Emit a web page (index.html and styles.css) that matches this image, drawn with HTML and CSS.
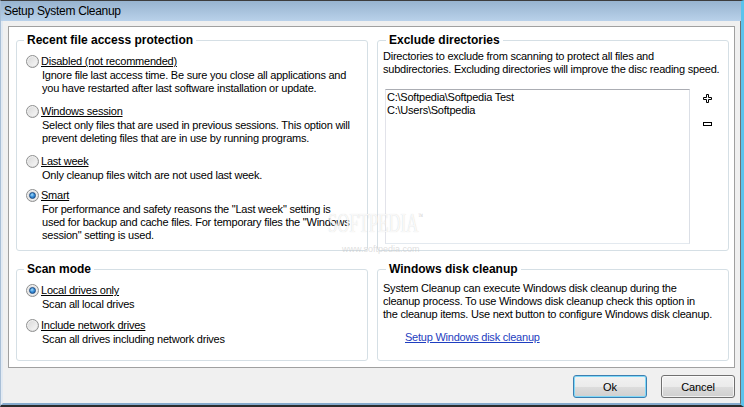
FILE: index.html
```html
<!DOCTYPE html>
<html>
<head>
<meta charset="utf-8">
<title>Setup System Cleanup</title>
<link rel="stylesheet" href="styles.css">
</head>
<body>
<div class="window">
  <div class="titlebar">Setup System Cleanup</div>
  <div class="client">
    <div class="panel">
      <fieldset class="group group-left group-recent">
        <legend>Recent file access protection</legend>
        <div class="options">
          <div class="option">
            <div class="opt-row"><span class="radio"></span><span class="opt-label">Disabled (not recommended)</span></div>
            <div class="opt-desc">Ignore file last access time. Be sure you close all applications and<br>you have restarted after last software installation or update.</div>
          </div>
          <div class="option">
            <div class="opt-row"><span class="radio"></span><span class="opt-label">Windows session</span></div>
            <div class="opt-desc">Select only files that are used in previous sessions. This option will<br>prevent deleting files that are in use by running programs.</div>
          </div>
          <div class="option">
            <div class="opt-row"><span class="radio"></span><span class="opt-label">Last week</span></div>
            <div class="opt-desc">Only cleanup files witch are not used last week.</div>
          </div>
          <div class="option option-tight">
            <div class="opt-row"><span class="radio checked"></span><span class="opt-label">Smart</span></div>
            <div class="opt-desc">For performance and safety reasons the "Last week" setting is<br>used for backup and cache files. For temporary files the "Windows<br>session" setting is used.</div>
          </div>
        </div>
      </fieldset>

      <fieldset class="group group-right group-exclude">
        <legend>Exclude directories</legend>
        <div class="text">Directories to exclude from scanning to protect all files and<br>subdirectories. Excluding directories will improve the disc reading speed.</div>
        <div class="list-row">
          <div class="listbox">
            <div class="list-item">C:\Softpedia\Softpedia Test</div>
            <div class="list-item">C:\Users\Softpedia</div>
          </div>
          <div class="list-tools">
            <svg class="tool tool-plus" width="9" height="9" viewBox="0 0 9 9"><path d="M3.5 0.5h2v3h3v2h-3v3h-2v-3h-3v-2h3z" fill="#fff" stroke="#000" stroke-width="1"/></svg>
            <svg class="tool tool-minus" width="9" height="5" viewBox="0 0 9 5"><rect x="0.5" y="0.5" width="8" height="3" fill="#fff" stroke="#000" stroke-width="1"/></svg>
          </div>
        </div>
      </fieldset>

      <fieldset class="group group-left group-scan">
        <legend>Scan mode</legend>
        <div class="options options-scan">
          <div class="option">
            <div class="opt-row"><span class="radio checked"></span><span class="opt-label">Local drives only</span></div>
            <div class="opt-desc">Scan all local drives</div>
          </div>
          <div class="option">
            <div class="opt-row"><span class="radio"></span><span class="opt-label">Include network drives</span></div>
            <div class="opt-desc">Scan all drives including network drives</div>
          </div>
        </div>
      </fieldset>

      <fieldset class="group group-right group-disk">
        <legend>Windows disk cleanup</legend>
        <div class="text">System Cleanup can execute Windows disk cleanup during the<br>cleanup process. To use Windows disk cleanup check this option in<br>the cleanup items. Use next button to configure Windows disk cleanup.</div>
        <a class="link" href="#">Setup Windows disk cleanup</a>
      </fieldset>

      <div class="watermark">
        <div class="wm-logo">SOFTPEDIA<sup>™</sup></div>
        <div class="wm-url">www.softpedia.com</div>
      </div>
    </div>
    <div class="buttons">
      <button class="btn btn-default">Ok</button>
      <button class="btn">Cancel</button>
    </div>
  </div>
</div>
</body>
</html>
```
FILE: styles.css
```css
html, body {
  margin: 0;
  padding: 0;
}

body {
  font-family: "Liberation Sans", Arial, sans-serif;
  font-size: 11px;
  letter-spacing: -0.23px;
  color: #000;
  background: #f0f0f0;
}

.window {
  width: 744px;
  height: 407px;
  box-sizing: border-box;
  border-top: 1px solid #3c3c3c;
  border-left: 1px solid #a9bfd6;
  border-right: 3px solid #5bc3ec;
  border-bottom: 2px solid #2c2c2c;
  display: flex;
  flex-direction: column;
  background: #f0f0f0;
}

.titlebar {
  height: 20px;
  flex: none;
  background: linear-gradient(#97b3cf, #b9d1ea);
  display: flex;
  align-items: center;
  padding-left: 3px;
  font-size: 12px;
  letter-spacing: -0.3px;
}

.client {
  flex: 1;
  min-height: 0;
  border-left: 2px solid #e2eaf3;
  border-right: 1px solid #6f6f6f;
  border-bottom: 2px solid #86aacd;
  display: flex;
  flex-direction: column;
  padding: 5px;
}

.panel {
  position: relative;
  height: 342px;
  flex: none;
  box-sizing: border-box;
  border: 1px solid #a0a0a0;
  background: #fff;
  padding: 6px 5px 6px 7px;
  display: grid;
  grid-template-columns: 352px 352px;
  grid-template-rows: 218px 99px;
  column-gap: 9px;
  row-gap: 11px;
}

.group {
  margin: 0;
  min-width: 0;
  border: 1px solid #d5dfe5;
  border-radius: 3px;
  box-sizing: border-box;
  padding: 0 5px 0 5px;
}

.group legend {
  font-size: 12px;
  font-weight: bold;
  line-height: 14px;
  padding: 0 3px;
  letter-spacing: 0;
}

.group-left {
  padding-left: 9px;
  padding-top: 7px;
}

.group-left legend {
  margin-left: -2px;
}

.group-right legend {
  margin-left: 3px;
}

.group-exclude {
  padding-top: 3px;
}

.group-disk {
  padding-top: 6px;
}

.options {
  display: flex;
  flex-direction: column;
  gap: 9px;
}

.options-scan {
  gap: 7px;
}

.option-tight {
  margin-top: -3px;
}

.opt-row {
  display: flex;
  align-items: center;
  height: 15px;
  line-height: 15px;
}

.radio {
  position: relative;
  width: 13px;
  height: 13px;
  box-sizing: border-box;
  border-radius: 50%;
  border: 1px solid #8e8f8f;
  background: radial-gradient(circle at 40% 35%, #ffffff 0, #f2f2f2 35%, #d4d4d4 100%);
  margin-right: 1px;
  flex: none;
}

.radio::before {
  content: "";
  position: absolute;
  left: 1px;
  top: 1px;
  width: 9px;
  height: 9px;
  border-radius: 50%;
  background: linear-gradient(135deg, #d9d9d9, #f7f7f7);
}

.radio.checked::after {
  content: "";
  position: absolute;
  left: 2px;
  top: 2px;
  width: 7px;
  height: 7px;
  box-sizing: border-box;
  border-radius: 50%;
  border: 1px solid #1b4b83;
  background: radial-gradient(circle at 40% 35%, #a6dcfa 0, #3d93dc 45%, #155ca8 100%);
}

.opt-label {
  text-decoration: underline;
  padding-left: 1px;
}

.opt-desc {
  line-height: 13px;
  padding-left: 16px;
}

.text {
  line-height: 13px;
}

.list-row {
  display: flex;
  margin-top: 13px;
}

.listbox {
  width: 305px;
  height: 155px;
  box-sizing: border-box;
  margin-left: 2px;
  border: 1px solid;
  border-color: #abadb3 #dbdfe6 #e3e9ef #e2e3ea;
  padding: 1px 1px;
  line-height: 13px;
  background: #fff;
}

.list-tools {
  display: flex;
  flex-direction: column;
  margin-left: 13px;
}

.tool {
  display: block;
}

.tool-plus {
  margin-top: 5px;
}

.tool-minus {
  margin-top: 19px;
}

.link {
  display: inline-block;
  margin-top: 10px;
  margin-left: 22px;
  line-height: 13px;
  color: #1e3ec0;
  text-decoration: underline;
}

.watermark {
  position: absolute;
  left: 319px;
  top: 176px;
  pointer-events: none;
}

.wm-logo {
  font-family: "Liberation Serif", "Times New Roman", serif;
  font-size: 27px;
  line-height: 28px;
  letter-spacing: 0;
  white-space: nowrap;
  color: rgba(255, 255, 255, 0.85);
  text-shadow: 0 0 1px rgba(130, 130, 130, 0.35);
  transform: scaleX(0.62);
  transform-origin: left top;
}

.wm-logo sup {
  font-size: 8px;
  vertical-align: 13px;
  color: rgba(170, 170, 170, 0.6);
  text-shadow: none;
}

.wm-url {
  margin-left: 14px;
  margin-top: 7px;
  font-size: 9px;
  line-height: 10px;
  letter-spacing: 0;
  color: rgba(200, 200, 200, 0.6);
}

.buttons {
  display: flex;
  justify-content: flex-end;
  gap: 14px;
  margin-top: 7px;
}

.btn {
  width: 74px;
  height: 23px;
  box-sizing: border-box;
  margin: 0;
  padding: 0;
  border: 1px solid #707070;
  border-radius: 3px;
  background: linear-gradient(#f2f2f2 0%, #ebebeb 50%, #dddddd 50%, #cfcfcf 100%);
  font-family: "Liberation Sans", Arial, sans-serif;
  font-size: 11px;
  letter-spacing: -0.1px;
  color: #000;
  box-shadow: inset 0 0 0 1px rgba(255, 255, 255, 0.7);
}

.btn-default {
  border-color: #3c7fb1;
  box-shadow: inset 0 0 0 1px #7fd8f8;
}
```
